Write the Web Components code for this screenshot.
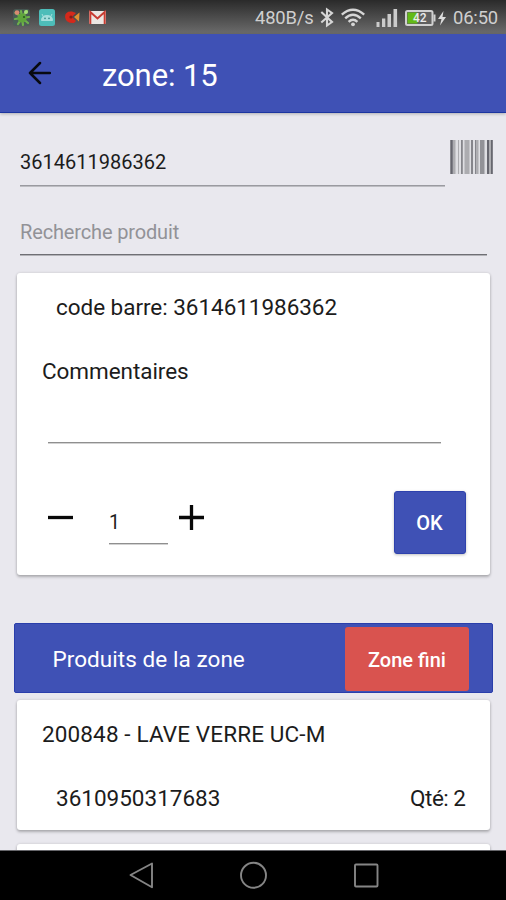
<!DOCTYPE html>
<html lang="fr">
<head>
<meta charset="utf-8">
<title>zone: 15</title>
<style>
  html, body { margin: 0; height: 900px; overflow: hidden; }
  body { font-family: Roboto, "Noto Sans", sans-serif; background: #e9e8ee; color: #1c1c1c; }
</style>
</head>
<body>
<inventory-app></inventory-app>
<script>
const define = (name, html) => customElements.define(name, class extends HTMLElement {
  constructor() {
    super();
    const t = document.createElement('template');
    t.innerHTML = html;
    this.attachShadow({ mode: 'open' }).append(t.content.cloneNode(true));
  }
});

define('status-bar', `
<style>
  :host { display: flex; justify-content: space-between; align-items: flex-start; height: 34px; box-sizing: border-box;
    background: linear-gradient(#2a2a2a, #484848 45%, #6c6c6c); color: #cfcfcf; line-height: 36px; }
  svg { display: block; flex: none; }
  .right { display: flex; }
  .speed { width: 64px; font-size: 18.4px; letter-spacing: -.15px; white-space: nowrap; }
  .clock { width: 53px; font-size: 18.4px; letter-spacing: -.15px; white-space: nowrap; }
  .lvl { font: 500 12px Roboto, sans-serif; fill: #ececec; }
</style>
<svg width="120" height="34" viewBox="0 0 120 34">
  <rect x="13" y="9" width="17" height="17" rx="3" fill="#48605a" opacity=".75"/>
  <g stroke="#6fb14c" stroke-width="2.2" stroke-linecap="round">
    <path d="M22 17 L15.5 13 M22 18 L15 19 M22 18 L18 24 M22 18 L23 25 M22 18 L28 23 M22 18 L29 17 M22 17 L27 11 M22 17 L21 11"/>
  </g>
  <circle cx="22" cy="18" r="4.6" fill="#5fa53c"/><circle cx="17" cy="12.6" r="2.4" fill="#d98a72"/>
  <circle cx="26" cy="12" r="2" fill="#a5df78"/><circle cx="24" cy="17" r="1.1" fill="#285a20"/>
  <rect x="39" y="9" width="16" height="17" rx="2.5" fill="#4dbdb9"/>
  <path d="M41.5 20.500 q0-5 5.500-5 q5.500 0 5.500 5z M43.5 17 l-1.5-3 M50.5 17 l1.5-3" fill="#a4dedc" stroke="#a4dedc" stroke-width="1"/>
  <circle cx="45" cy="18.3" r=".9" fill="#38908f"/><circle cx="49" cy="18.3" r=".9" fill="#38908f"/>
  <path d="M72 11.500 Q65 11 65 17 Q66 23.500 74 23 L76 21 L72 17 L76 13z" fill="#d4291b"/>
  <path d="M79.500 12.500 L74 17 L79 21.500z" fill="#de9031"/><circle cx="71" cy="17" r="1.6" fill="#811d18"/>
  <rect x="89" y="11" width="17" height="13" rx="1" fill="#ece7e3"/>
  <path d="M90.300 24 V12 L97.500 18.500 L104.700 12 V24" fill="none" stroke="#c83c32" stroke-width="2"/>
</svg>
<div class="right">
  <span class="speed">480B/s</span>
  <svg width="134" height="34" viewBox="319 0 134 34" fill="none">
    <path d="M321.300 12 L332 22 L327 25.500 V9.500 L332 13 L321.300 22.500" stroke="#d6d6d6" stroke-width="2.100"/>
    <g stroke="#d6d6d6" stroke-width="2.400">
      <path d="M341.800 14.600 Q353 5 364.200 14.600"/><path d="M345.200 18.300 Q353 11.300 360.800 18.300"/><path d="M348.600 21.800 Q353 17.600 357.400 21.800"/>
    </g>
    <circle cx="353" cy="24.300" r="1.900" fill="#d6d6d6"/>
    <g fill="#cbcbcb"><rect x="376.500" y="22" width="3" height="5"/><rect x="382" y="18.500" width="3.300" height="8.500"/><rect x="387.500" y="14" width="3.500" height="13"/><rect x="393.500" y="9" width="3.600" height="18"/></g>
    <rect x="406" y="11" width="26.500" height="14" rx="1.500" fill="#606060" stroke="#d0d0d0" stroke-width="2"/>
    <rect x="407.500" y="12.500" width="10" height="11" fill="#63ba17"/>
    <rect x="433.500" y="14.500" width="2" height="7" fill="#d0d0d0"/>
    <text class="lvl" x="413" y="22.300">42</text>
    <path d="M443.500 11 L438 19 H441.500 L440 25.500 L446 17 H442.500z" fill="#dcdcdc"/>
  </svg>
  <span class="clock">06:50</span>
</div>`);

define('app-bar', `
<style>
  :host { display: flex; align-items: center; box-sizing: border-box; height: 79px; padding: 5px 0 0 28px; background: #3f51b5;
    border-bottom: 1px solid #1c35a0; box-shadow: 0 1px 3px rgba(0,0,0,.25); color: #fff; font-size: 31px; letter-spacing: -.1px; }
  svg { display: block; margin: -5px 51px 0 0; }
</style>
<svg width="23" height="24" fill="none" stroke="#080a10" stroke-width="2.500" stroke-linecap="round" stroke-linejoin="round"><path d="M22 12 H2 M12 2 L2 12 L12 22"/></svg>
<slot></slot>`);

define('line-field', `
<style>
  :host { display: block; box-sizing: border-box; font-size: 20px; line-height: 30px; white-space: nowrap;
    background: linear-gradient(var(--line, #6f6f74), var(--line, #6f6f74)) bottom / 100% 1px no-repeat;
    border-bottom: 1px solid var(--edge, #b3b3b8); background-origin: padding-box; background-clip: padding-box; }
</style><slot></slot>`);

define('bar-code', `
<style>:host { display: block; width: 43px; height: 34px; } svg { display: block; }</style>
<svg width="43" height="34">
  <rect width="43" height="34" fill="#dedee2"/>
  <g fill="#67676f"><rect x=".3" width="2.500" height="34"/><rect x="11" width="1.800" height="34" fill="#85858b"/><rect x="21" width="2" height="34" fill="#85858b"/><rect x="25" width="1.500" height="34" fill="#85858b"/><rect x="37" width="2" height="34"/><rect x="40.600" width="2.200" height="34"/></g>
  <g fill="#acacb0"><rect x="3" width="2.500" height="34"/><rect x="8" width="1" height="34"/><rect x="14.500" width="5" height="34"/><rect x="26.500" width="2" height="34"/><rect x="30" width="4.500" height="34" fill="#929297"/><rect x="39" width="1.600" height="34"/></g>
</svg>`);

define('paper-card', `
<style>
  :host { display: flex; flex-direction: column; box-sizing: border-box; margin: 0 16px 0 17px; background: #fff; border-radius: 3px;
    box-shadow: 0 2px 3px rgba(0,0,0,.24), 0 0 3px rgba(0,0,0,.14); font-size: 22.500px; line-height: 30px; white-space: nowrap; }
</style><slot></slot>`);

define('flat-button', `
<style>
  :host { display: flex; align-items: center; justify-content: center; box-sizing: border-box; border-radius: 3px; color: #fff;
    font-weight: 500; font-size: 20px; white-space: nowrap; }
</style><slot></slot>`);

define('quantity-row', `
<style>
  :host { display: flex; align-items: flex-start; }
  svg { display: block; }
  line-field { width: 59px; height: 34px; --line: #8f8f8f; --edge: #d2d2d2; margin: 20px 11px 0 36.500px; line-height: 23px; font-size: 19.500px; }
  flat-button { width: 72px; height: 63px; padding-top: 1px; margin-left: auto; margin-right: 24.500px; background: #3f51b5; border: 1px solid #2e42ad; box-shadow: 0 1px 3px rgba(0,0,0,.25); }
</style>
<svg width="25" height="54"><path d="M0 26.500 H25" stroke="#080808" stroke-width="3.300"/></svg>
<line-field>1</line-field>
<svg width="25" height="54"><path d="M0 26.500 H25 M12.500 14 V39" stroke="#080808" stroke-width="3.300"/></svg>
<flat-button>OK</flat-button>`);

define('section-bar', `
<style>
  :host { display: flex; align-items: center; box-sizing: border-box; height: 70px; margin: 0 13px 0 14px; padding: 2px 23px 0 37.500px;
    background: #3f51b5; border: 1px solid #2a3eab; border-radius: 2px; color: #fff; font-size: 22.500px; letter-spacing: .06px; white-space: nowrap; }
  flat-button { margin-left: auto; width: 124px; height: 64px; margin-top: -1px; padding: 2px 0 0 0; background: #d9534f; letter-spacing: 0; }
</style>
<slot></slot><flat-button>Zone fini</flat-button>`);

define('nav-bar', `
<style>:host { display: block; height: 50px; background: #000; border-top: 1px solid #66666a; box-sizing: border-box; flex: none; } svg { display: block; }</style>
<svg width="506" height="49" viewBox="0 851 506 49" fill="none" stroke="#858585" stroke-width="1.900" stroke-linejoin="round">
  <path d="M130.500 875 L152 863.500 V887.300z"/><circle cx="253.500" cy="875.300" r="12.500"/><rect x="355" y="864.500" width="22.500" height="22" rx="1"/>
</svg>`);

define('inventory-app', `
<style>
  :host { display: flex; flex-direction: column; height: 900px; width: 506px; overflow: hidden; }
  main { flex: 1; min-height: 0; overflow: hidden; display: flex; flex-direction: column; background: #e9e8ee; }
  main > * { flex: none; }
  status-bar, app-bar { flex: none; }
  app-bar { position: relative; }
  .scan { display: flex; justify-content: space-between; padding: 27px 13px 0 20px; }
  .scan line-field { width: 425px; height: 47px; padding-top: 7px; --line: #9a9aa0; --edge: #bdbdc2; }
  .search { margin: 21px 19px 0 20px; height: 48px; padding-top: 9px; color: #929297; letter-spacing: -.15px; }
  .entry { margin-top: 17px; height: 301.500px; }
  .code { margin: 19px 0 0 39px; letter-spacing: -.04px; }
  .label { margin: 34px 0 0 25px; letter-spacing: -.06px; }
  .comment { margin: 26px 49px 0 31px; height: 32px; --line: #8f8f8f; --edge: #d2d2d2; }
  quantity-row { margin: 47px 0 0 30.500px; }
  section-bar { margin-top: 48.500px; }
  .item { margin-top: 7px; height: 130px; }
  .name { margin: 19px 0 0 25px; letter-spacing: .13px; }
  .line { display: flex; justify-content: space-between; margin: 34px 24.500px 0 39px; }
  .qty { letter-spacing: -.5px; }
  .next { margin-top: 14px; height: 60px; }
</style>
<status-bar></status-bar>
<app-bar>zone: 15</app-bar>
<main>
  <div class="scan"><line-field>3614611986362</line-field><bar-code></bar-code></div>
  <line-field class="search">Recherche produit</line-field>
  <paper-card class="entry">
    <div class="code">code barre: 3614611986362</div>
    <div class="label">Commentaires</div>
    <line-field class="comment"></line-field>
    <quantity-row></quantity-row>
  </paper-card>
  <section-bar>Produits de la zone</section-bar>
  <paper-card class="item">
    <div class="name">200848 - LAVE VERRE UC-M</div>
    <div class="line"><span>3610950317683</span><span class="qty">Qté: 2</span></div>
  </paper-card>
  <paper-card class="next"></paper-card>
</main>
<nav-bar></nav-bar>`);
</script>
</body>
</html>
